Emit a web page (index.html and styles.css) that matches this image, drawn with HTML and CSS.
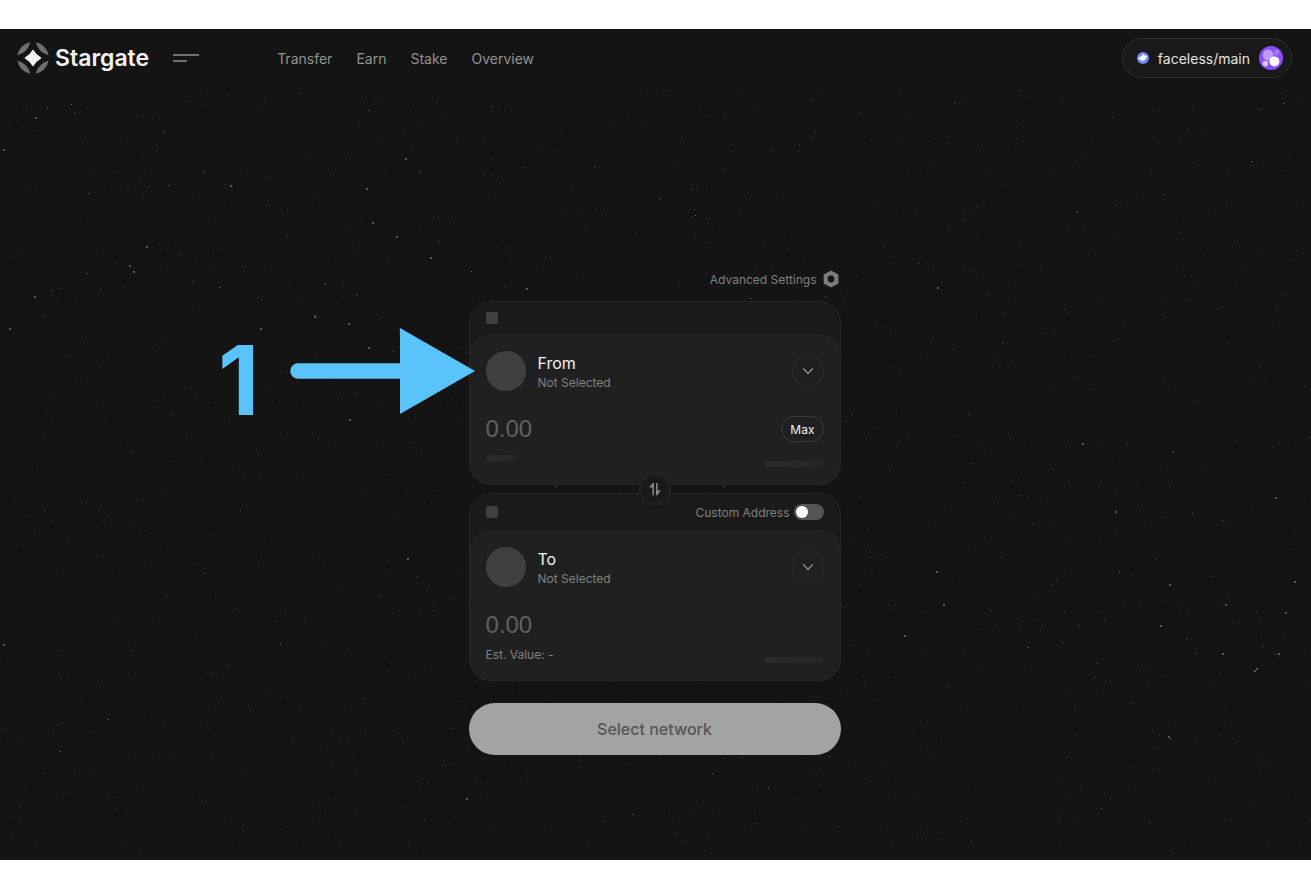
FILE: index.html
```html
<!DOCTYPE html>
<html lang="en">
<head>
    <meta charset="UTF-8">
    <meta name="viewport" content="width=device-width, initial-scale=1.0">
    <title>Stargate</title>
    <link rel="stylesheet" href="styles.css">
</head>
<body>
    <div class="app">
        <svg class="stars" id="stars" viewBox="0 0 1311 831" preserveAspectRatio="xMidYMid slice" aria-hidden="true"></svg>

        <header class="header">
            <a class="logo" href="#">
                <svg width="32" height="32" viewBox="0 0 32 32" aria-hidden="true">
                    <g fill="#6f6f6f">
                        <path d="M.3 13.4A16 16 0 0 1 13.4.3A19 19 0 0 1 .3 13.4z"/>
                        <path d="M18.6.3A16 16 0 0 1 31.7 13.4A19 19 0 0 1 18.6.3z"/>
                        <path d="M31.7 18.6A16 16 0 0 1 18.6 31.7A19 19 0 0 1 31.7 18.6z"/>
                        <path d="M13.4 31.7A16 16 0 0 1 .3 18.6A19 19 0 0 1 13.4 31.7z"/>
                    </g>
                    <path d="M16 8.6Q18.6 13.4 23.4 16Q18.6 18.6 16 23.4Q13.4 18.6 8.6 16Q13.4 13.4 16 8.6z" fill="#f2f2f2" stroke="#f2f2f2" stroke-width="1.6" stroke-linejoin="round"/>
                </svg>
                <span>Stargate</span>
            </a>
            <button class="menu-btn" aria-label="Menu">
                <span class="menu-line"></span>
                <span class="menu-line short"></span>
            </button>
            <nav class="nav">
                <a href="#">Transfer</a>
                <a href="#">Earn</a>
                <a href="#">Stake</a>
                <a href="#">Overview</a>
            </nav>
            <button class="wallet">
                <svg width="12" height="12" viewBox="0 0 12 12" aria-hidden="true">
                    <circle cx="6" cy="6" r="6" fill="#7084ff"/>
                    <path d="M1.5 6.6C2 5 3.3 4.3 4.6 4.3C5.3 3.4 4.7 2.6 5.6 2.3C6.5 2.1 7 2.9 7.5 3.4C9 3.2 10.3 4.2 10.2 5.4C10.1 6.4 9 6.3 8.4 6.6C8.6 7.8 7.6 8.7 6.4 8.5L5.3 9.6L4.4 9.2L4.6 8.1C3.8 7.8 3.6 7.3 3.1 7.6L2.2 8.3Z" fill="#fff"/>
                </svg>
                <span>faceless/main</span>
                <svg width="24" height="24" viewBox="0 0 24 24" aria-hidden="true">
                    <circle cx="12" cy="12" r="12" fill="#8a4dfb"/>
                    <circle cx="9" cy="9" r="5.4" fill="#c09cfd"/>
                    <circle cx="17.6" cy="6.4" r="2.8" fill="#a575fc"/>
                    <circle cx="6.4" cy="17.6" r="2.8" fill="#d9c3fe"/>
                    <circle cx="15.4" cy="15.4" r="5" fill="#fff"/>
                </svg>
            </button>
        </header>

        <main class="transfer">
            <button class="settings">
                <span>Advanced Settings</span>
                <svg width="16" height="18" viewBox="0 0 16 18" aria-hidden="true">
                    <path d="M8 1.4L14.6 5V13L8 16.6L1.4 13V5Z" fill="#7c7c7c" stroke="#7c7c7c" stroke-width="1.6" stroke-linejoin="round"/>
                    <circle cx="8" cy="9" r="3.4" fill="#151515"/>
                </svg>
            </button>

            <section class="card">
                <div class="card-top">
                    <span class="square"></span>
                </div>
                <div class="panel">
                    <div class="asset">
                        <span class="token"></span>
                        <div class="asset-text">
                            <h2>From</h2>
                            <p>Not Selected</p>
                        </div>
                        <button class="round-btn" aria-label="Select source">
                            <svg width="12" height="8" viewBox="0 0 12 8" aria-hidden="true"><path d="M1.2 1.4L6 6.4L10.8 1.4" fill="none" stroke="#a0a0a0" stroke-width="1.2"/></svg>
                        </button>
                    </div>
                    <div class="amount-row">
                        <input class="amount" type="text" placeholder="0.00" aria-label="Amount to send">
                        <button class="max-btn">Max</button>
                    </div>
                    <div class="info-row">
                        <span class="bar small"></span>
                        <span class="bar"></span>
                    </div>
                </div>
            </section>

            <div class="swap">
                <button class="swap-btn" aria-label="Swap direction">
                    <svg width="14" height="14" viewBox="0 0 14 14" aria-hidden="true"><path d="M1.2 5.6L4.6 1H6V13.2H4.4V5.6ZM12.8 8.4L9.4 13.2H8V1H9.6V8.4Z" fill="#858585"/></svg>
                </button>
            </div>

            <section class="card">
                <div class="card-top tall">
                    <span class="square"></span>
                    <label class="custom">Custom Address <input class="toggle" type="checkbox"></label>
                </div>
                <div class="panel">
                    <div class="asset">
                        <span class="token"></span>
                        <div class="asset-text">
                            <h2>To</h2>
                            <p>Not Selected</p>
                        </div>
                        <button class="round-btn" aria-label="Select destination">
                            <svg width="12" height="8" viewBox="0 0 12 8" aria-hidden="true"><path d="M1.2 1.4L6 6.4L10.8 1.4" fill="none" stroke="#a0a0a0" stroke-width="1.2"/></svg>
                        </button>
                    </div>
                    <div class="amount-row">
                        <input class="amount" type="text" placeholder="0.00" aria-label="Amount to receive">
                    </div>
                    <div class="info-row">
                        <span class="value">Est. Value: -</span>
                        <span class="bar"></span>
                    </div>
                </div>
            </section>

            <button class="submit-btn">Select network</button>

            <!-- step marker pointing at the From row -->
            <div class="step">
                <span class="step-number">1</span>
                <svg width="185" height="86" viewBox="0 0 185 86" aria-hidden="true"><path d="M8 35.3H110V0L185 43L110 86V50.7H8A7.7 7.7 0 0 1 8 35.3Z" fill="#5ac3fa"/></svg>
            </div>
        </main>
    </div>

    <script src="stars.js"></script>
</body>
</html>
```
FILE: styles.css
```css
* {
    box-sizing: border-box;
    margin: 0;
    padding: 0;
}
body {
    background: #fff;
    color: #f2f2f2;
    font-family: Inter, "Liberation Sans", sans-serif;
    padding: 29px 0 28px;
}
button, input {
    font-family: inherit;
    color: inherit;
    background: none;
    border: none;
}
button {
    cursor: pointer;
}
a {
    color: inherit;
    text-decoration: none;
}
svg {
    display: block;
    flex-shrink: 0;
}
.app {
    position: relative;
    background: #141414;
    min-height: calc(100vh - 57px);
    padding-right: 2px;
    overflow: hidden;
}
.stars {
    position: absolute;
    inset: 0;
    width: 100%;
    height: 100%;
}
.header {
    position: relative;
    display: flex;
    align-items: center;
    height: 58px;
    padding: 0 17px;
}
.logo {
    display: flex;
    align-items: center;
    gap: 6px;
    font-size: 23px;
    font-weight: 600;
}
.menu-btn {
    display: flex;
    flex-direction: column;
    gap: 4px;
    margin-left: 24px;
}
.menu-line {
    width: 26px;
    height: 2px;
    background: #6f6f6f;
}
.menu-line.short {
    width: 14px;
}
.nav {
    display: flex;
    gap: 24px;
    margin-left: 78px;
    font-size: 14px;
    color: #929292;
}
.wallet {
    display: flex;
    align-items: center;
    gap: 9px;
    height: 40px;
    margin-left: auto;
    padding: 0 8px 0 14px;
    background: #191919;
    border: 1px solid #2e2e2e;
    border-radius: 20px;
    font-size: 14px;
    color: #e4e4e4;
}
.transfer {
    position: relative;
    display: flex;
    flex-direction: column;
    width: 100%;
    max-width: 372px;
    margin: 182px auto 40px;
}
.settings {
    display: flex;
    align-items: center;
    align-self: flex-end;
    gap: 6px;
    height: 20px;
    margin: 0 2px 12px 0;
    font-size: 12px;
    color: #808080;
}
.card {
    background: #1a1a1a;
    border: 1px solid #262626;
    border-radius: 22px;
}
.card-top {
    display: flex;
    align-items: center;
    justify-content: space-between;
    height: 32px;
    padding: 0 16px;
}
.card-top.tall {
    height: 36px;
}
.square {
    width: 12px;
    height: 12px;
    border-radius: 2px;
    background: #404040;
}
.panel {
    margin: 0 -1px -1px;
    padding: 16px 16px 15px;
    background: #202020;
    border: 1px solid #262626;
    border-radius: 22px;
}
.asset {
    display: flex;
    align-items: center;
    gap: 12px;
    height: 40px;
}
.token {
    width: 40px;
    height: 40px;
    border-radius: 50%;
    background: #404040;
}
.asset-text {
    flex: 1;
    padding-top: 4px;
}
.asset-text h2 {
    font-size: 16px;
    line-height: 20px;
    font-weight: 400;
}
.asset-text p {
    font-size: 12px;
    line-height: 20px;
    color: #808080;
}
.round-btn, .swap-btn {
    display: flex;
    align-items: center;
    justify-content: center;
    width: 32px;
    height: 32px;
    border: 1px solid #2b2b2b;
    border-radius: 50%;
}
.amount-row {
    display: flex;
    align-items: center;
    justify-content: space-between;
    height: 32px;
    margin-top: 22px;
}
.amount {
    width: 200px;
    font-family: "Liberation Sans", sans-serif;
    font-size: 24px;
}
.amount::placeholder {
    color: #606060;
}
.max-btn {
    height: 26px;
    padding: 0 8px;
    border: 1px solid #3a3a3a;
    border-radius: 13px;
    font-size: 12px;
}
.info-row {
    display: flex;
    justify-content: space-between;
    align-items: flex-end;
    height: 22px;
    margin-top: 2px;
}
.bar {
    width: 60px;
    height: 6px;
    margin-bottom: 2px;
    border-radius: 3px;
    background: linear-gradient(90deg, #2c2c2c, #252525);
}
.bar.small {
    width: 30px;
    margin-bottom: 8px;
}
.value {
    font-size: 12px;
    line-height: 20px;
    color: #808080;
}
.swap {
    display: flex;
    justify-content: center;
    align-items: center;
    height: 8px;
}
.swap-btn {
    position: relative;
    flex-shrink: 0;
    background: #1a1a1a;
}
.custom {
    display: flex;
    align-items: center;
    gap: 4px;
    font-size: 12px;
    color: #808080;
}
.toggle {
    appearance: none;
    display: flex;
    align-items: center;
    width: 30px;
    height: 16px;
    padding: 2px;
    border-radius: 8px;
    background: #555;
}
.toggle::before {
    content: "";
    width: 12px;
    height: 12px;
    border-radius: 50%;
    background: #fff;
}
.toggle:checked {
    justify-content: flex-end;
}
.submit-btn {
    height: 52px;
    margin-top: 22px;
    border-radius: 26px;
    background: #a3a3a3;
    color: #555;
    font-size: 16px;
    font-weight: 500;
}
.step {
    position: absolute;
    top: 59px;
    right: 366px;
    display: flex;
    align-items: flex-start;
    gap: 30px;
    color: #5ac3fa;
    pointer-events: none;
}
.step-number {
    font-size: 96px;
    line-height: 104px;
    font-weight: 700;
}
```
FILE: stars.js
```js
// bright stars: x, y, size
const bright = [
    [35, 88, 2], [71, 75, 1], [74, 84, 1], [47, 78, 1], [164, 102, 1], [3, 120, 2],
    [204, 143, 1], [230, 156, 2], [88, 164, 1], [168, 156, 1], [269, 176, 1], [366, 159, 2],
    [405, 129, 2], [419, 142, 1], [368, 81, 1], [372, 193, 2], [396, 207, 2], [286, 207, 1],
    [430, 228, 2], [438, 212, 1], [146, 217, 2], [129, 236, 2], [133, 242, 2], [87, 244, 1],
    [34, 267, 2], [51, 261, 1], [193, 252, 1], [219, 258, 1], [245, 237, 1], [258, 268, 1],
    [325, 254, 1], [357, 265, 1], [314, 287, 2], [348, 294, 2], [260, 299, 2], [9, 299, 2],
    [315, 286, 1], [368, 318, 2], [393, 322, 1], [349, 390, 2], [466, 324, 1],
    [407, 529, 2], [3, 615, 2], [466, 769, 2], [445, 736, 1], [204, 544, 1], [280, 614, 1],
    [492, 77, 1], [594, 137, 1], [695, 186, 1], [691, 160, 1], [660, 169, 1], [706, 189, 1],
    [526, 259, 2], [751, 269, 1], [825, 267, 1], [471, 242, 1], [556, 457, 1], [724, 457, 1],
    [954, 73, 1], [1077, 183, 1], [1164, 165, 1], [1252, 132, 1], [1283, 74, 1], [918, 234, 1],
    [937, 258, 2], [1002, 313, 1], [969, 385, 1], [1082, 414, 2], [1126, 415, 1], [1173, 422, 1],
    [1115, 482, 2], [1192, 484, 1], [1222, 491, 1], [1275, 468, 2], [936, 542, 2], [943, 575, 2],
    [990, 581, 1], [1057, 550, 1], [1119, 543, 1], [1169, 555, 2], [1225, 575, 2], [1294, 552, 2],
    [1285, 583, 2], [904, 606, 2], [1028, 618, 1], [1062, 613, 1], [1078, 596, 1], [1105, 591, 1],
    [1160, 596, 2], [1186, 609, 1], [1195, 624, 1], [1222, 624, 2], [1262, 617, 1], [1278, 624, 2],
    [1097, 634, 1], [1094, 648, 1], [1254, 641, 2], [1256, 639, 2], [1168, 707, 2], [1170, 710, 1],
    [768, 759, 1], [712, 744, 1], [1101, 779, 1], [632, 785, 1], [60, 722, 1], [108, 690, 1]
];

const svg = document.getElementById('stars');

function addStar(x, y, size, color) {
    const rect = document.createElementNS('http://www.w3.org/2000/svg', 'rect');
    rect.setAttribute('x', x);
    rect.setAttribute('y', y);
    rect.setAttribute('width', size);
    rect.setAttribute('height', size);
    rect.setAttribute('fill', color);
    svg.appendChild(rect);
}

// fixed seed keeps the sky the same on each load
let seed = 7;
function random() {
    seed = (seed * 16807) % 2147483647;
    return seed / 2147483647;
}

for (let i = 0; i < 2000; i++) {
    const x = Math.floor(random() * 1311);
    const y = Math.floor(60 + random() * 765);
    const level = Math.floor(28 + Math.pow(random(), 3) * 52);
    addStar(x, y, 1, `rgb(${level}, ${level}, ${level})`);
}

bright.forEach(([x, y, size]) => addStar(x, y, size, size === 2 ? '#595959' : '#6a6a6a'));
```
